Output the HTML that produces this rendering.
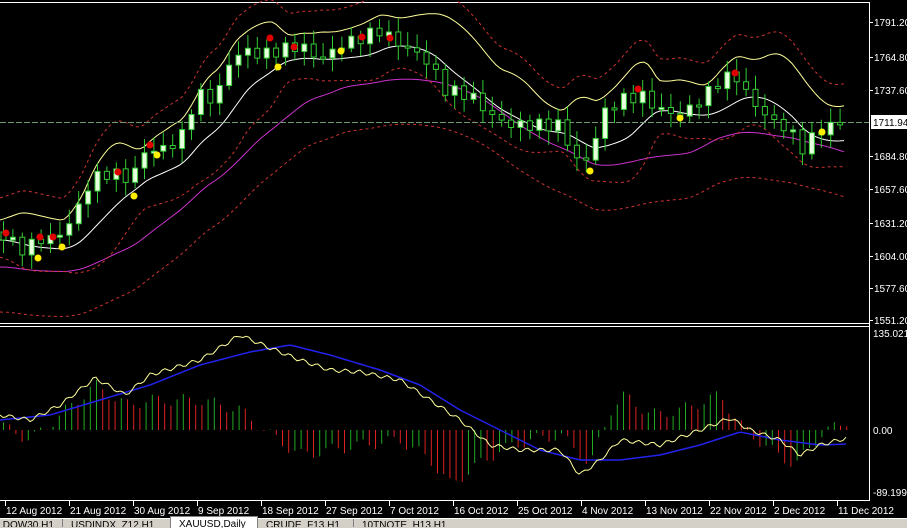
<!DOCTYPE html>
<html><head><meta charset="utf-8"><style>
html,body{margin:0;padding:0;background:#000;width:907px;height:527px;overflow:hidden;font-family:"Liberation Sans",sans-serif}
svg{position:absolute;left:0;top:0}
.t{position:absolute;top:518px;height:9px;background:#d4d0c8;font-size:10px;color:#000;white-space:nowrap;overflow:hidden;line-height:14px}
</style></head><body>
<svg id="c" width="907" height="527" xmlns="http://www.w3.org/2000/svg"></svg>
<div class="t" style="left:0;width:907px;border-top:1px solid #fff"></div>
<div class="t" style="left:0;width:60px;top:519px;height:8px;background:transparent;">&nbsp;DOW30,H1</div>
<div class="t" style="left:62px;top:519px;height:8px;background:transparent;border-left:1px solid #808080;padding-left:8px">USDINDX_Z12,H1</div>
<div class="t" style="left:170px;top:516px;height:11px;width:78px;background:#fff;border:1px solid #808080;border-bottom:none;padding-left:8px;line-height:16px">XAUUSD,Daily</div>
<div class="t" style="left:258px;top:519px;height:8px;background:transparent;padding-left:8px">CRUDE_F13,H1</div>
<div class="t" style="left:353px;top:519px;height:8px;background:transparent;border-left:1px solid #808080;padding-left:8px">10TNOTE_H13,H1</div>
<script>
function interp(pts,x){for(let i=0;i<pts.length-1;i++){if(x<=pts[i+1][0]){const a=pts[i],b=pts[i+1];return a[1]+(b[1]-a[1])*(x-a[0])/(b[0]-a[0]);}}return pts[pts.length-1][1];}
const P=[[0,232],[20,250],[40,240],[60,235],[80,205],[90,180],[110,172],[130,180],[145,150],[160,150],[180,140],[190,110],[200,95],[215,100],[230,60],[245,50],[260,55],[280,50],[300,45],[320,60],[340,45],[360,38],[380,30],[400,45],[420,55],[430,65],[445,90],[470,95],[490,115],[510,125],[530,125],[560,125],[575,160],[590,160],[600,115],[620,100],[640,95],[660,110],[680,115],[700,100],[720,80],[735,75],[750,100],[770,120],[790,130],[800,150],[820,130],[847,120]];
let s='';
const W=869;
const F='font-size="10" font-family="Liberation Sans"';
s+=`<line x1="0" y1="2.5" x2="${W}" y2="2.5" stroke="#fff"/>`;
s+=`<line x1="${W+.5}" y1="2" x2="${W+.5}" y2="500" stroke="#fff"/>`;
s+=`<line x1="0" y1="323.5" x2="${W}" y2="323.5" stroke="#fff"/><line x1="0" y1="326.5" x2="${W}" y2="326.5" stroke="#fff"/>`;
s+=`<line x1="0" y1="500.5" x2="${W+1}" y2="500.5" stroke="#fff"/>`;
const pl=[["1791.20",22],["1764.80",57],["1737.60",90],["1684.80",156],["1657.60",189],["1631.20",223],["1604.00",256],["1577.60",288],["1551.20",320]];
pl.forEach(([t,y])=>{s+=`<line x1="${W}" y1="${y+.5}" x2="${W+4}" y2="${y+.5}" stroke="#fff"/><text x="874" y="${y+4}" fill="#fff" ${F}>${t}</text>`});
[["135.021",333],["0.00",430],["-89.199",492]].forEach(([t,y])=>{s+=`<text x="873" y="${y+4}" fill="#fff" ${F}>${t}</text>`});
const dl=[["12 Aug 2012",7],["21 Aug 2012",71],["30 Aug 2012",135],["9 Sep 2012",199],["18 Sep 2012",263],["27 Sep 2012",327],["7 Oct 2012",391],["16 Oct 2012",455],["25 Oct 2012",519],["4 Nov 2012",583],["13 Nov 2012",647],["22 Nov 2012",711],["2 Dec 2012",775],["11 Dec 2012",839]];
dl.forEach(([t,x])=>{s+=`<line x1="${x-1.5}" y1="500" x2="${x-1.5}" y2="506" stroke="#fff"/><text x="${x-1}" y="514" fill="#fff" ${F}>${t}</text>`});
function line(f,c,extra){let d='';for(let x=0;x<=847;x+=4){d+=(x?'L':'M')+x+','+f(x).toFixed(1);}s+=`<path d="${d}" fill="none" stroke="${c}" ${extra||''}/>`;}
function ma(x,n){let t=0,k=0;for(let j=x-n;j<=x;j+=3){t+=interp(P,Math.max(0,j));k++;}return t/k;}
const mid=x=>ma(x,60)+8, slow=x=>ma(x,120)+35;
const dev=x=>{let t=0,k=0;const m=ma(x,60);for(let j=x-60;j<=x;j+=3){const v=interp(P,Math.max(0,j))-m;t+=v*v;k++;}return Math.sqrt(t/k)*1.8+12;};
line(x=>mid(x)-dev(x)-8,"#ffff99");
line(x=>mid(x),"#ffffff");
line(x=>slow(x),"#cc33cc");
line(x=>mid(x)-dev(x)-30,"#cc3333",'stroke-dasharray="3,3"');
line(x=>mid(x)+dev(x)*0.6+10,"#cc3333",'stroke-dasharray="3,3"');
line(x=>slow(x)+45,"#cc3333",'stroke-dasharray="3,3"');
s+=`<line x1="0" y1="122.5" x2="${W}" y2="122.5" stroke="#6f9a6f" stroke-dasharray="6,2"/>`;
let prev=interp(P,0);
for(let x=3;x<=847;x+=9.4){const c=interp(P,x)+Math.sin(x*0.37)*6;const o=prev;prev=c;
 const hi=Math.min(o,c)-4-Math.abs(Math.sin(x*1.3))*10, lo=Math.max(o,c)+4+Math.abs(Math.cos(x*0.9))*10;
 s+=`<line x1="${x+.5}" y1="${hi}" x2="${x+.5}" y2="${lo}" stroke="#33cc33"/>`;
 const top=Math.min(o,c),h=Math.max(2,Math.abs(o-c));
 s+=`<rect x="${x-2}" y="${top}" width="5" height="${h}" fill="${c<o?'#e8ffe0':'#000'}" stroke="#33cc33"/>`;}
[[6,233],[40,237],[53,237],[118,172],[150,145],[270,38],[294,47],[362,37],[390,38],[638,89],[735,73]].forEach(([x,y])=>s+=`<circle cx="${x}" cy="${y}" r="3.5" fill="#e00000"/>`);
[[38,258],[62,247],[134,196],[157,155],[278,67],[341,51],[590,171],[680,118],[822,132]].forEach(([x,y])=>s+=`<circle cx="${x}" cy="${y}" r="3.5" fill="#ffee00"/>`);
s+=`<rect x="871" y="115" width="36" height="14" fill="#fff"/><text x="873" y="126" fill="#000" ${F}>1711.94</text>`;
const Y=[[0,415],[30,420],[60,405],[95,378],[125,395],[150,375],[200,360],[240,335],[270,348],[300,360],[330,370],[360,372],[400,380],[430,400],[460,420],[490,445],[520,450],[560,450],[580,475],[600,460],[620,440],[660,445],[700,430],[730,418],[750,430],[780,440],[800,455],[820,445],[847,438]];
const B=[[0,420],[50,415],[100,400],[150,385],[200,365],[250,352],[290,345],[330,355],[380,370],[420,385],[460,410],[500,430],[540,450],[580,460],[620,460],[660,455],[700,445],[740,432],[780,440],[820,445],[847,444]];
const H=[[0,5],[30,-10],[60,15],[95,45],[125,25],[150,30],[200,30],[240,20],[270,-5],[300,-25],[330,-20],[360,-15],[400,-10],[430,-30],[450,-55],[470,-40],[500,-20],[530,-10],[560,-5],[590,-35],[610,20],[625,35],[650,15],[680,20],[720,35],[740,5],[770,-20],[795,-35],[820,-5],[847,10]];
let pd=0;
for(let x=3;x<=847;x+=6.2){const d=interp(H,x)*1.0+Math.sin(x*0.8)*6;
 s+=`<line x1="${x+.5}" y1="430" x2="${x+.5}" y2="${430-d}" stroke="${d>pd?'#22aa22':'#dd2222'}"/>`;pd=d;}
let dy='',db='';for(let x=0;x<=847;x+=3){dy+=(x?'L':'M')+x+','+(interp(Y,x)+Math.sin(x*0.45)*2);db+=(x?'L':'M')+x+','+interp(B,x);}
s+=`<path d="${db}" fill="none" stroke="#2222ee" stroke-width="1.5"/><path d="${dy}" fill="none" stroke="#ffff99"/>`;
document.getElementById('c').innerHTML=s;
</script>
</body></html>
